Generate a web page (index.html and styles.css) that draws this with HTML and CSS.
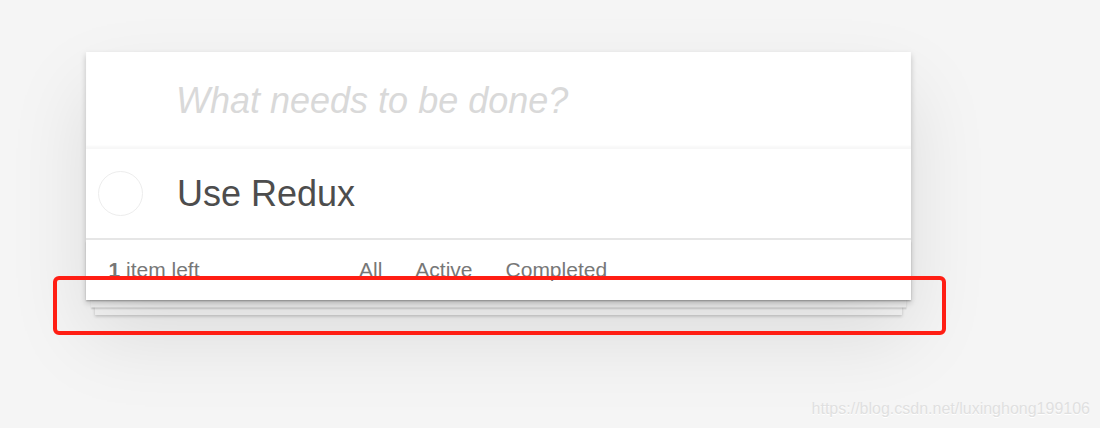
FILE: index.html
```html
<!DOCTYPE html>
<html lang="en">
<head>
<meta charset="utf-8">
<title>Todos</title>
<link rel="stylesheet" href="styles.css">
</head>
<body>
<div class="page">
  <section class="todoapp">
    <header class="header">
      <input class="new-todo" type="text" placeholder="What needs to be done?">
    </header>
    <section class="main">
      <ul class="todo-list">
        <li class="todo">
          <span class="toggle"></span>
          <label class="todo-label">Use Redux</label>
        </li>
      </ul>
    </section>
    <footer class="footer">
      <span class="todo-count"><strong>1</strong> item left</span>
      <ul class="filters">
        <li><a class="filter selected">All</a></li>
        <li><a class="filter">Active</a></li>
        <li><a class="filter">Completed</a></li>
      </ul>
    </footer>
  </section>
  <div class="highlight"></div>
</div>
<div class="watermark">https://blog.csdn.net/luxinghong199106</div>
</body>
</html>
```
FILE: styles.css
```css
html, body {
  margin: 0;
  padding: 0;
}
body {
  background: #f5f5f5;
  font-family: "Liberation Sans", Arial, sans-serif;
  color: #4d4d4d;
  width: 1100px;
  height: 428px;
  overflow: hidden;
  position: relative;
}
.page {
  padding: 52px 0 0 86px;
}
.todoapp {
  width: 825px;
  background: #fff;
  position: relative;
  box-shadow: 0 3px 6px rgba(0, 0, 0, 0.2), 0 37px 75px rgba(0, 0, 0, 0.1);
}
.header {
  display: flex;
}
.new-todo {
  display: block;
  width: 100%;
  height: 97px;
  box-sizing: border-box;
  margin: 0;
  border: none;
  outline: none;
  padding: 0 24px 0 90px;
  font-family: "Liberation Sans", Arial, sans-serif;
  font-size: 36px;
  color: #4d4d4d;
  background: transparent;
  box-shadow: inset 0 -3px 2px rgba(0, 0, 0, 0.03);
}
.new-todo::placeholder {
  font-style: italic;
  color: #d9d9d9;
}
.main {
  position: relative;
}
.todo-list {
  list-style: none;
  margin: 0;
  padding: 0;
}
.todo {
  display: flex;
  align-items: center;
  height: 89px;
  box-sizing: border-box;
  padding-left: 12px;
}
.toggle {
  width: 45px;
  height: 45px;
  box-sizing: border-box;
  border: 1.5px solid #ededed;
  border-radius: 50%;
  flex: none;
}
.todo-label {
  margin-left: 34px;
  font-size: 36px;
  line-height: 43px;
  color: #4d4d4d;
}
.footer {
  position: relative;
  display: flex;
  align-items: center;
  height: 62px;
  box-sizing: border-box;
  padding: 15px 22.5px;
  border-top: 2px solid #e6e6e6;
  color: #777;
  font-size: 21px;
  line-height: 30px;
}
.footer::before {
  content: "";
  position: absolute;
  left: 0;
  right: 0;
  bottom: 0;
  height: 60px;
  z-index: -1;
  box-shadow: 0 1.5px 1.5px rgba(0, 0, 0, 0.2),
    0 12px 0 -4.5px #f6f6f6,
    0 13.5px 1.5px -4.5px rgba(0, 0, 0, 0.2),
    0 24px 0 -9px #f6f6f6,
    0 25.5px 3px -9px rgba(0, 0, 0, 0.2);
}
.todo-count {
  width: 234px;
  flex: none;
}
.todo-count strong {
  font-weight: bold;
}
.filters {
  display: flex;
  list-style: none;
  margin: 0;
  padding: 0;
}
.filters li {
  margin: 0 5px;
}
.filter {
  display: block;
  padding: 0 10.5px;
  border: 1.5px solid transparent;
  color: #777;
}
.highlight {
  position: absolute;
  left: 53px;
  top: 276px;
  width: 893px;
  height: 59px;
  box-sizing: border-box;
  border: 4px solid #ff1e14;
  border-radius: 6px;
}
.watermark {
  position: absolute;
  right: 10px;
  top: 399px;
  font-size: 16px;
  line-height: 20px;
  color: #e0e0e0;
  text-shadow: 0 1px 0 #ffffff;
}
```
